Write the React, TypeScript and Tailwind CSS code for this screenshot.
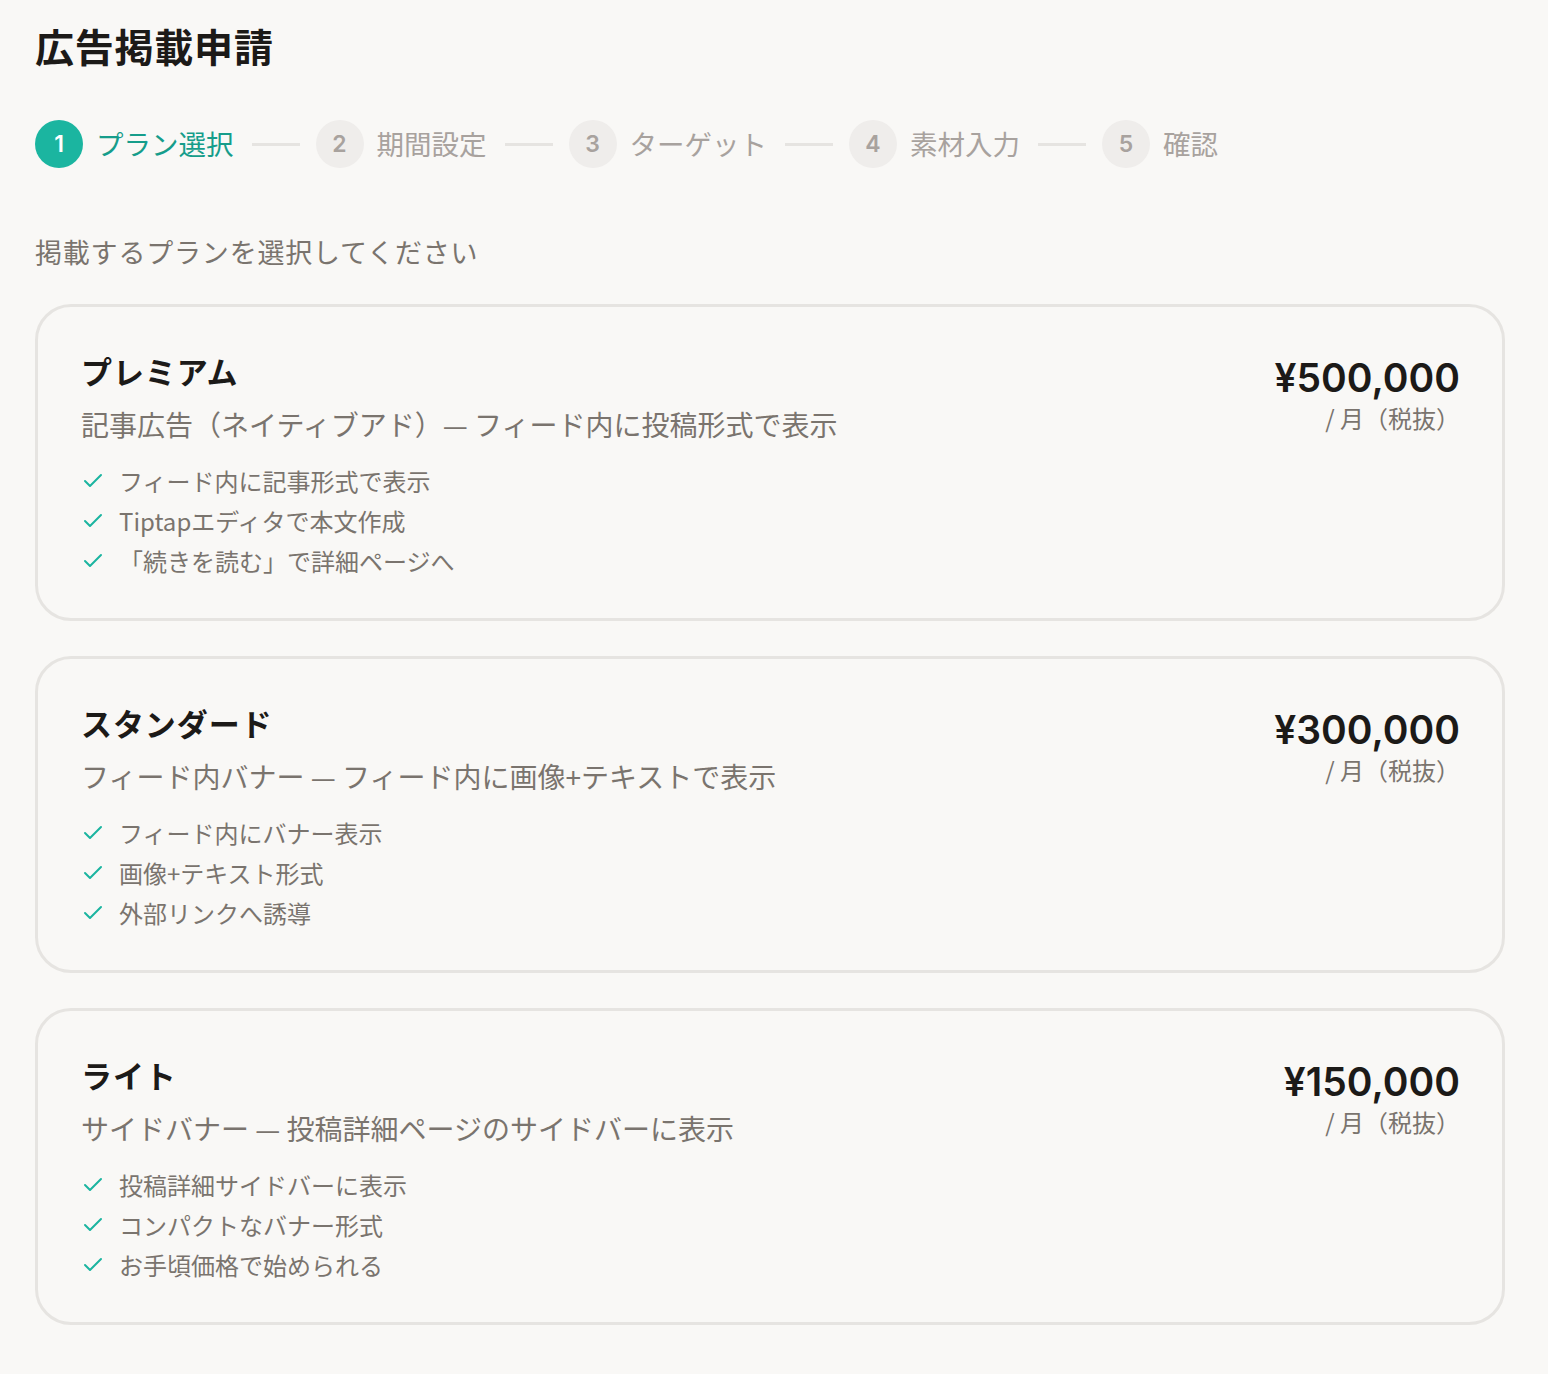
import { Check } from "lucide-react";

const steps = ["プラン選択", "期間設定", "ターゲット", "素材入力", "確認"];

const plans = [
  {
    name: "プレミアム",
    desc: "記事広告（ネイティブアド）— フィード内に投稿形式で表示",
    price: "¥500,000",
    features: ["フィード内に記事形式で表示", "Tiptapエディタで本文作成", "「続きを読む」で詳細ページへ"],
  },
  {
    name: "スタンダード",
    desc: "フィード内バナー — フィード内に画像+テキストで表示",
    price: "¥300,000",
    features: ["フィード内にバナー表示", "画像+テキスト形式", "外部リンクへ誘導"],
  },
  {
    name: "ライト",
    desc: "サイドバナー — 投稿詳細ページのサイドバーに表示",
    price: "¥150,000",
    features: ["投稿詳細サイドバーに表示", "コンパクトなバナー形式", "お手頃価格で始められる"],
  },
];

export default function App() {
  return (
    <div
      className="min-h-screen bg-[#f9f8f6] pl-[35px] pr-[43px] pt-[22px] pb-10 text-[#1c1a18]"
      style={{ fontFamily: '"Noto Sans CJK JP", "Noto Sans", sans-serif' }}
    >
      <h1 className="text-[39px] font-bold leading-[46px] tracking-[0.02em]">広告掲載申請</h1>

      <div className="mt-[52px] flex items-center">
        {steps.map((s, i) => (
          <div key={s} className="flex items-center">
            {i > 0 && <div className="ml-[18px] mr-[16px] h-[3px] w-[48px] bg-[#e6e4e1]" />}
            <div className="flex items-center gap-[13px]">
              <div
                className={
                  i === 0
                    ? "flex h-[48px] w-[48px] items-center justify-center rounded-full bg-[#1bb5a0] font-['Inter'] text-[23px] font-semibold text-white"
                    : "flex h-[48px] w-[48px] items-center justify-center rounded-full bg-[#efedeb] font-['Inter'] text-[23px] font-semibold text-[#a8a29e]"
                }
              >
                {i + 1}
              </div>
              <span
                className={
                  i === 0 ? "text-[27.5px] text-[#169d8b]" : "text-[27.5px] text-[#a8a29e]"
                }
              >
                {s}
              </span>
            </div>
          </div>
        ))}
      </div>

      <p className="mt-[64px] text-[27px] tracking-[0.03em] text-[#7a746e]">掲載するプランを選択してください</p>

      <div className="mt-[31px] flex flex-col gap-[35px]">
        {plans.map((p) => (
          <div
            key={p.name}
            className="flex justify-between rounded-[36px] border-[3px] border-[#e6e4e1] bg-[#f9f8f6] pt-[42px] pr-[42px] pb-[37px] pl-[43px]"
          >
            <div>
              <div className="text-[31px] font-bold leading-[44px] tracking-[0.03em]">{p.name}</div>
              <div className="mt-[12px] text-[28px] leading-[38px] text-[#7a746e]">{p.desc}</div>
              <ul className="mt-[18px] flex flex-col">
                {p.features.map((f) => (
                  <li key={f} className="flex h-[40px] items-center gap-[14px] text-[24px] text-[#7a746e]">
                    <Check size={24} strokeWidth={2} className="text-[#1bb5a0]" />
                    <span>{f}</span>
                  </li>
                ))}
              </ul>
            </div>
            <div className="flex flex-col items-end pt-[4px]">
              <div className="font-['Inter'] text-[39px] font-semibold leading-[50px]">{p.price}</div>
              <div className="mt-[-3px] text-[24px] text-[#7a746e]">/ 月（税抜）</div>
            </div>
          </div>
        ))}
      </div>
    </div>
  );
}
